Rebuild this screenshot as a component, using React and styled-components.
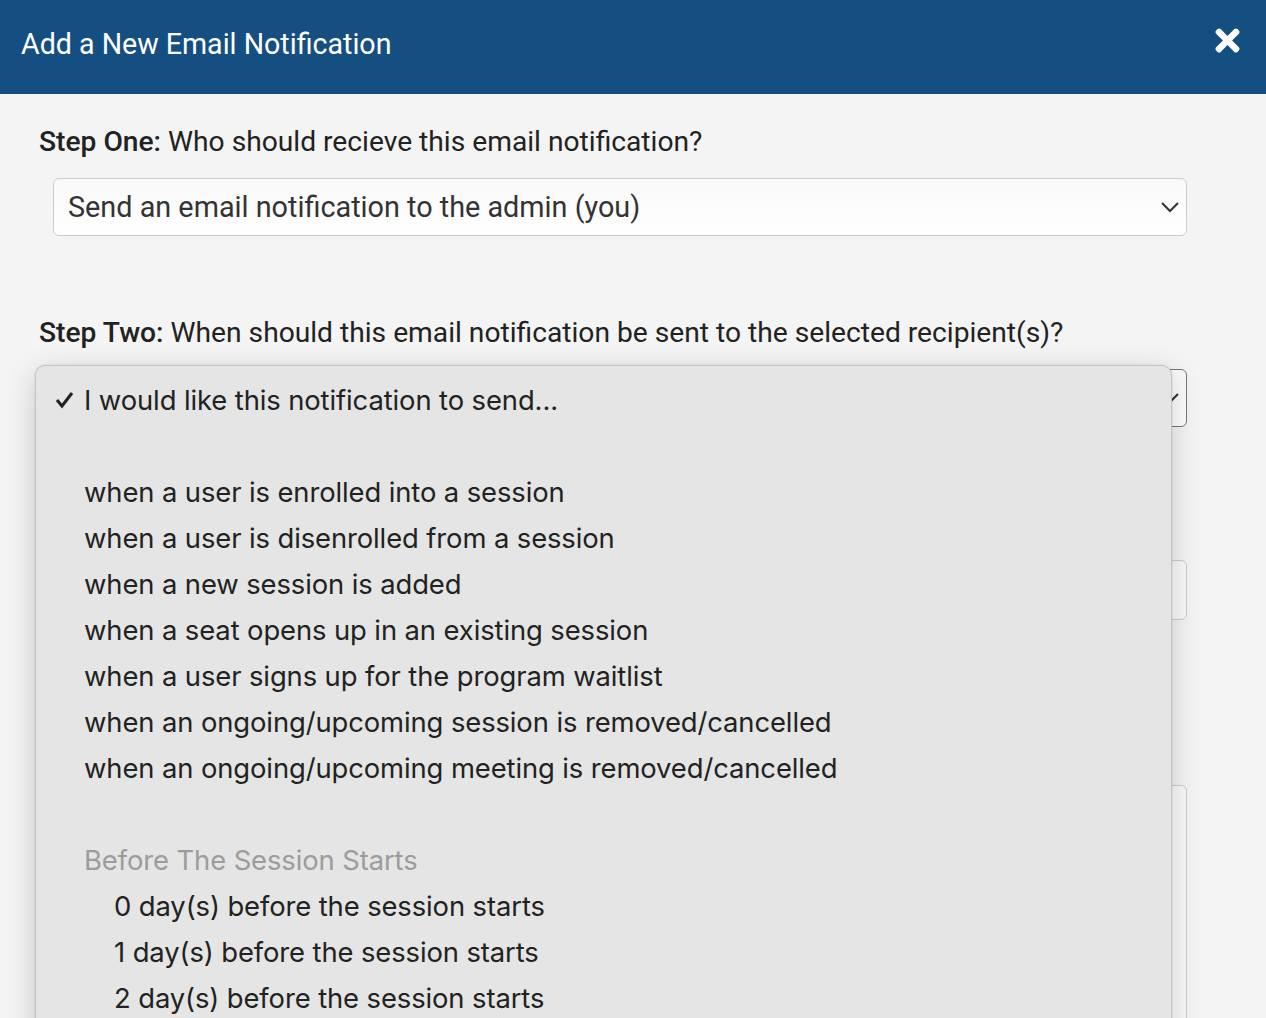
import React from 'react';
import styled, { createGlobalStyle } from 'styled-components';
import { FaTimes } from 'react-icons/fa';

const GlobalStyle = createGlobalStyle`
    html, body {
        margin: 0;
        padding: 0;
        background: #f4f4f4;
        font-family: Roboto, "Liberation Sans", sans-serif;
        overflow: hidden;
    }
`

const Modal = styled.div`
    width: 1266px;
    height: 1018px;
    background: #f4f4f4;
    overflow: hidden;
`

const Header = styled.div`
    height: 94px;
    background: #154f82;
    display: flex;
    align-items: center;
    justify-content: space-between;
    padding: 0 21px 6px 21px;
    box-sizing: border-box;
`

const Title = styled.h2`
    margin: 0;
    color: #fff;
    font-size: 28.6px;
    font-weight: 400;
`

const CloseButton = styled.button`
    border: none;
    background: none;
    padding: 0;
    margin-bottom: 8px;
    color: #fff;
    display: flex;
    cursor: pointer;
    font-size: 35px;
`

const Body = styled.div`
    position: relative;
    padding: 28px 79px 0 39px;
`

const StepLabel = styled.div`
    font-size: 28.2px;
    color: #222;
    line-height: 40px;
    margin-top: ${props => props.top || 0}px;

    strong {
        font-weight: 500;
    }
`

const SelectBox = styled.div`
    margin: 16px 0 0 14px;
    height: 58px;
    box-sizing: border-box;
    border: 1px solid ${props => props.focused ? '#777' : '#ccc'};
    border-radius: 6px;
    background: linear-gradient(#f9f9f9, #fff);
    display: flex;
    align-items: center;
    justify-content: space-between;
    padding: 0 6px 0 14px;
    font-size: 28.8px;
    color: #333;
`

const InputBox = styled.div`
    margin: ${props => props.top}px 0 0 14px;
    height: ${props => props.height}px;
    box-sizing: border-box;
    border: 1px solid #ccc;
    border-radius: 6px;
    background: #fafafa;
`

const Menu = styled.div`
    position: absolute;
    top: 271px;
    left: 35px;
    width: 1137px;
    height: 760px;
    box-sizing: border-box;
    background: #e4e5e4;
    border: 1px solid #c4c4c4;
    border-radius: 10px;
    box-shadow: 0 8px 30px rgba(0,0,0,.18), 0 0 3px rgba(0,0,0,.08);
    padding-top: 11px;
    font-family: Inter, "Liberation Sans", sans-serif;
`

const MenuItem = styled.div`
    height: 46px;
    display: flex;
    align-items: center;
    position: relative;
    padding-left: ${props => props.indent ? 78 : 48}px;
    font-size: 27.4px;
    color: ${props => props.group ? '#9c9c9c' : '#222'};
    letter-spacing: -0.1px;
`

const Check = styled.svg`
    position: absolute;
    left: 19px;
    top: 14px;
`

const Chevron = () => (
    <svg width="20" height="12" viewBox="0 0 20 12">
        <polyline points="2,2 10,10 18,2" fill="none" stroke="#333" strokeWidth="2" />
    </svg>
)

const options = [
    '',
    'when a user is enrolled into a session',
    'when a user is disenrolled from a session',
    'when a new session is added',
    'when a seat opens up in an existing session',
    'when a user signs up for the program waitlist',
    'when an ongoing/upcoming session is removed/cancelled',
    'when an ongoing/upcoming meeting is removed/cancelled',
    '',
]

const beforeOptions = [0, 1, 2, 3, 4, 5, 6, 7]

function App() {
    return (
        <>
            <GlobalStyle />
            <Modal>
                <Header>
                    <Title>Add a New Email Notification</Title>
                    <CloseButton aria-label='close'><FaTimes /></CloseButton>
                </Header>
                <Body>
                    <StepLabel>
                        <strong>Step One:</strong> Who should recieve this email notification?
                    </StepLabel>
                    <SelectBox>
                        Send an email notification to the admin (you)
                        <Chevron />
                    </SelectBox>

                    <StepLabel top={77}>
                        <strong>Step Two:</strong> When should this email notification be sent to the selected recipient(s)?
                    </StepLabel>
                    {/* the native list is open over this select, so its value sits under the menu */}
                    <SelectBox focused>
                        <span />
                        <Chevron />
                    </SelectBox>

                    <InputBox top={133} height={60} />
                    <InputBox top={165} height={300} />

                    <Menu>
                        <MenuItem>
                            <Check width="20" height="18" viewBox="0 0 20 18">
                                <polyline points="2,9 7,15 17,2" fill="none" stroke="#222" strokeWidth="3" />
                            </Check>
                            I would like this notification to send...
                        </MenuItem>
                        {options.map((text, i) => (
                            <MenuItem key={i}>{text}</MenuItem>
                        ))}
                        <MenuItem group>Before The Session Starts</MenuItem>
                        {beforeOptions.map(n => (
                            <MenuItem indent key={n}>{n} day(s) before the session starts</MenuItem>
                        ))}
                    </Menu>
                </Body>
            </Modal>
        </>
    )
}

export default App;
